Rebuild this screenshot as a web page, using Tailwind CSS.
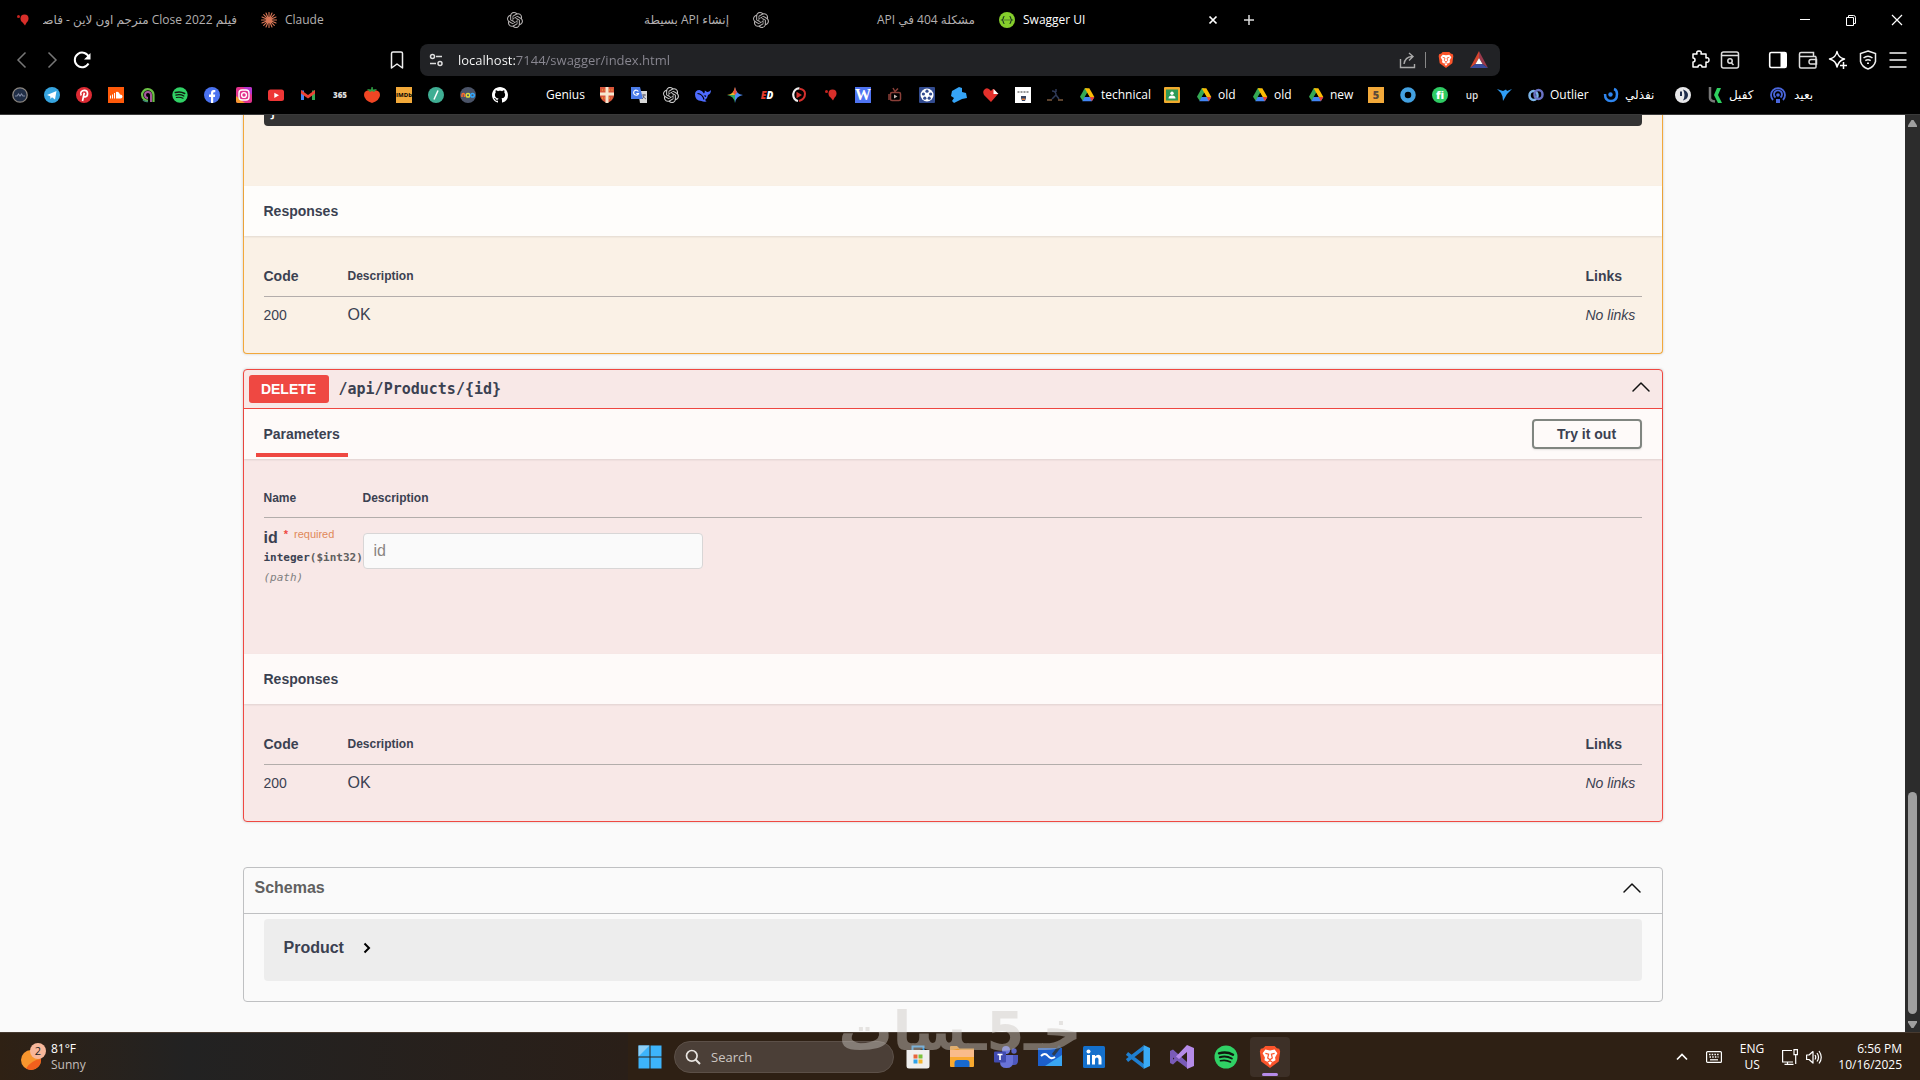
<!DOCTYPE html>
<html lang="en">
<head>
  <meta charset="UTF-8" />
  <meta name="viewport" content="width=device-width, initial-scale=1" />
  <title>Swagger UI</title>
  <script src="https://cdn.jsdelivr.net/npm/@tailwindcss/browser@4"></script>
</head>
<body class="flex h-screen flex-col overflow-hidden bg-[#fafafa] font-['Liberation_Sans',Arial,sans-serif] text-[#3b4151]">

  <!-- shared icons -->
  <svg class="hidden" aria-hidden="true">
    <symbol id="openai" viewBox="0 0 24 24">
      <path fill="currentColor" d="M22.2819 9.8211a5.9847 5.9847 0 0 0-.5157-4.9108 6.0462 6.0462 0 0 0-6.5098-2.9A6.0651 6.0651 0 0 0 4.9807 4.1818a5.9847 5.9847 0 0 0-3.9977 2.9 6.0462 6.0462 0 0 0 .7427 7.0966 5.98 5.98 0 0 0 .511 4.9107 6.051 6.051 0 0 0 6.5146 2.9001A5.9847 5.9847 0 0 0 13.2599 24a6.0557 6.0557 0 0 0 5.7718-4.2058 5.9894 5.9894 0 0 0 3.9977-2.9001 6.0557 6.0557 0 0 0-.7475-7.0729zm-9.022 12.6081a4.4755 4.4755 0 0 1-2.8764-1.0408l.1419-.0804 4.7783-2.7582a.7948.7948 0 0 0 .3927-.6813v-6.7369l2.02 1.1686a.071.071 0 0 1 .038.052v5.5826a4.504 4.504 0 0 1-4.4945 4.4944zm-9.6607-4.1254a4.4708 4.4708 0 0 1-.5346-3.0137l.142.0852 4.783 2.7582a.7712.7712 0 0 0 .7806 0l5.8428-3.3685v2.3324a.0804.0804 0 0 1-.0332.0615L9.74 19.9502a4.4992 4.4992 0 0 1-6.1408-1.6464zM2.3408 7.8956a4.485 4.485 0 0 1 2.3655-1.9728V11.6a.7664.7664 0 0 0 .3879.6765l5.8144 3.3543-2.0201 1.1685a.0757.0757 0 0 1-.071 0l-4.8303-2.7865A4.504 4.504 0 0 1 2.3408 7.872zm16.5963 3.8558L13.1038 8.364 15.1192 7.2a.0757.0757 0 0 1 .071 0l4.8303 2.7913a4.4944 4.4944 0 0 1-.6765 8.1042v-5.6772a.79.79 0 0 0-.407-.667zm2.0107-3.0231l-.142-.0852-4.7735-2.7818a.7759.7759 0 0 0-.7854 0L9.409 9.2297V6.8974a.0662.0662 0 0 1 .0284-.0615l4.8303-2.7866a4.4992 4.4992 0 0 1 6.6802 4.66zM8.3065 12.863l-2.02-1.1638a.0804.0804 0 0 1-.038-.0567V6.0742a4.4992 4.4992 0 0 1 7.3757-3.4537l-.142.0805L8.704 5.459a.7948.7948 0 0 0-.3927.6813zm1.0976-2.3654l2.602-1.4998 2.6069 1.4998v2.9994l-2.5974 1.4997-2.6067-1.4997Z" />
    </symbol>
    <symbol id="drive" viewBox="0 0 24 24">
      <path fill="#34a853" d="M8.500 2h3.500l2.300 4L5.800 21 1.500 14.500z" />
      <path fill="#fbbc04" d="M8.500 2h7l7.500 13h-7z" />
      <path fill="#4285f4" d="M8.500 15H23l-3.700 6.500H5z" />
      <path fill="#ea4335" d="M16 15h7l-3.700 6.500z" />
      <path fill="#000" d="M12 9l3.500 6h-7z" />
    </symbol>
    <symbol id="spotify" viewBox="0 0 24 24">
      <circle cx="12" cy="12" r="11.500" fill="#30d165" />
      <g fill="none" stroke="#10180f" stroke-linecap="round">
        <path stroke-width="2.400" d="M5 8.300c5-1.400 10-.9 14 1.400" />
        <path stroke-width="2" d="M5.800 12.200c4.200-1.200 8.400-.7 12 1.300" />
        <path stroke-width="1.600" d="M6.500 15.800c3.500-.9 6.900-.5 10 1.200" />
      </g>
    </symbol>
    <symbol id="brave" viewBox="0 0 24 26">
      <path fill="#fb542b" d="M7 1h10l2.500 2.500L22 4l1 3-1.500 11-9.500 7-9.500-7L1 7l1-3 2.500-.5z" />
      <path fill="#fff" d="M7 5l5 1 5-1 3 4-2.500 4.500.5 3-3.500 2L12 22l-2.500-3.500-3.500-2 .5-3L4 9z" />
      <path fill="none" stroke="#fb542b" stroke-width="1.300" d="M7 9l3.500 1-1 4 2.500 2 2.500-2-1-4L17 9M9.500 18.500L12 17l2.500 1.500" />
    </symbol>
    <symbol id="balloon" viewBox="0 0 16 16">
      <circle cx="9.500" cy="6.500" r="4" fill="#d92f2a" /><path fill="#d92f2a" d="M6.500 9h6L10 13.500z" /><circle cx="3.500" cy="4.500" r="1.500" fill="#c5231f" />
    </symbol>
    <symbol id="chevron-up" viewBox="0 0 20 20">
      <path fill="none" stroke="#111" stroke-width="1.500" stroke-linecap="round" stroke-linejoin="round" d="M2 14l8-8 8 8" />
    </symbol>
  </svg>

  <header class="shrink-0 border-b border-[#3a3a3a] bg-black font-['Open_Sans','Noto_Sans','DejaVu_Sans',sans-serif] text-white">
    <!-- tab strip -->
    <div class="flex h-10 items-center pl-[5px] text-xs">
      <div class="flex w-[246px] items-center gap-3 pr-3.5 pl-2.5 text-[#b4b0b0]">
        <svg class="size-4 shrink-0"><use href="#balloon" /></svg>
        <span dir="rtl" class="flex-1 overflow-hidden whitespace-nowrap">فيلم Close 2022 مترجم اون لاين - فاصل</span>
      </div>
      <div class="flex w-[246px] items-center gap-2 pr-3.5 pl-2.5 text-[#b4b0b0]">
        <svg class="size-4 shrink-0" viewBox="0 0 16 16" stroke="#d97757" stroke-width="1.100" stroke-linecap="round"><path d="M8 .5v15M.5 8h15M2.700 2.700l10.600 10.600M13.300 2.700L2.700 13.300M5 1l6 14M11 1L5 15M1 5l14 6M1 11l14-6" /></svg>
        <span>Claude</span>
      </div>
      <div class="flex w-[246px] items-center gap-2 pr-3.5 pl-2.5 text-[#b4b0b0]">
        <svg class="size-4 shrink-0"><use href="#openai" /></svg>
        <span dir="rtl" class="flex-1 whitespace-nowrap">إنشاء API بسيطة</span>
      </div>
      <div class="flex w-[246px] items-center gap-2 pr-3.5 pl-2.5 text-[#b4b0b0]">
        <svg class="size-4 shrink-0"><use href="#openai" /></svg>
        <span dir="rtl" class="flex-1 whitespace-nowrap">مشكلة 404 في API</span>
      </div>
      <div class="flex w-[246px] items-center gap-2 pr-3.5 pl-2.5">
        <svg class="size-4 shrink-0" viewBox="0 0 16 16"><circle cx="8" cy="8" r="8" fill="#85ce2c" /><path fill="none" stroke="#1d3b22" stroke-width="1.200" d="M5.500 4.500q-1.200 0-1.200 1.500T3 8q1.300.5 1.300 2t1.200 1.500M10.500 4.500q1.200 0 1.200 1.500T13 8q-1.300.5-1.300 2t-1.200 1.500" /><path stroke="#1d3b22" stroke-width="1.200" stroke-dasharray="1 1" d="M5.500 8h5" /></svg>
        <span class="flex-1">Swagger UI</span>
        <button type="button" aria-label="Close tab" class="size-4"><svg class="size-4" viewBox="0 0 16 16"><path stroke="#fff" stroke-width="1.700" d="M4.500 4.500l7 7M11.500 4.500l-7 7" /></svg></button>
      </div>
      <button type="button" aria-label="New tab" class="ml-1.5"><svg class="size-4" viewBox="0 0 16 16"><path stroke="#ddd" stroke-width="1.500" d="M8 3v10M3 8h10" /></svg></button>
      <div class="ml-auto flex gap-[30px] pr-[15px]">
        <button type="button" aria-label="Minimize"><svg class="size-4" viewBox="0 0 16 16"><path stroke="#fff" d="M3 7.500h10" /></svg></button>
        <button type="button" aria-label="Restore"><svg class="size-4" viewBox="0 0 16 16"><path fill="none" stroke="#fff" d="M3.500 5.500h7v8h-7zM5.500 5V3.500h5q2 0 2 2v6h-1.500" /></svg></button>
        <button type="button" aria-label="Close"><svg class="size-4" viewBox="0 0 16 16"><path stroke="#fff" stroke-width="1.200" d="M3 3l10 10M13 3L3 13" /></svg></button>
      </div>
    </div>

    <!-- toolbar -->
    <div class="grid h-10 grid-cols-[1fr_56.25%_1fr] items-center">
      <div class="flex items-center pr-[13px] pl-3">
        <button type="button" aria-label="Back"><svg class="size-5" viewBox="0 0 20 20"><path fill="none" stroke="#777" stroke-width="1.500" d="M13.500 2.500L6 10l7.500 7.500" /></svg></button>
        <button type="button" aria-label="Forward" class="ml-2.5"><svg class="size-5" viewBox="0 0 20 20"><path fill="none" stroke="#777" stroke-width="1.500" d="M6.500 2.500L14 10l-7.500 7.500" /></svg></button>
        <button type="button" aria-label="Reload" class="ml-2.5"><svg class="size-5" viewBox="0 0 20 20"><path fill="none" stroke="#fff" stroke-width="2" d="M16.500 13.500A7.300 7.300 0 1 1 17 7.500" /><path fill="#fff" d="M18.500 3v6.500H12z" /></svg></button>
        <button type="button" aria-label="Bookmark" class="ml-auto"><svg class="size-5" viewBox="0 0 20 20"><path fill="none" stroke="#eee" stroke-width="1.500" stroke-linejoin="round" d="M4.500 3.500q0-1.500 1.500-1.500h8q1.500 0 1.500 1.500V18L10 14l-5.500 4z" /></svg></button>
      </div>
      <div class="flex h-8 items-center rounded-lg bg-[#212225] pr-3 pl-2">
        <svg class="size-4 shrink-0" viewBox="0 0 16 16"><g fill="none" stroke="#ddd" stroke-width="1.500"><circle cx="4.500" cy="4.500" r="2" /><path d="M8 4.500h6M2 11.500h6" /><circle cx="12" cy="11.500" r="2" /></g></svg>
        <label for="address" class="sr-only">Address</label>
        <!-- host part is white, the rest of the address is grey -->
        <input id="address" type="text" value="localhost:7144/swagger/index.html" class="ml-3.5 h-6 flex-1 bg-[linear-gradient(to_right,#fff_57px,#8a8892_57px)] bg-clip-text text-[13px] text-transparent outline-none" />
        <svg class="size-[18px] shrink-0" viewBox="0 0 18 18"><path fill="none" stroke="#aaa" stroke-width="1.400" d="M1.500 8v8.500h14V13M5 13q1-7 8-7.500M10 2l4 3.500L10 9.500" /></svg>
        <span class="mx-2 h-4 w-px bg-[#888]"></span>
        <svg class="ml-1 h-5 w-4 shrink-0"><use href="#brave" /></svg>
        <svg class="ml-4 size-[18px] shrink-0" viewBox="0 0 18 18"><path fill="#d6452e" d="M9 0v7l-3.500 6L0 17z" /><path fill="#9b3a4c" d="M9 0l9 17-5.500-4L9 7z" /><path fill="#3b4b9b" d="M0 17l5.500-4h7l5.500 4z" /><path fill="#fff" d="M9 7l3.500 6h-7z" /></svg>
      </div>
      <div class="flex items-center justify-end gap-2.5 pr-3">
        <button type="button" aria-label="Extensions"><svg class="size-5" viewBox="0 0 20 20"><path fill="none" stroke="#fff" stroke-width="1.500" stroke-linejoin="round" d="M3 4h4q-1-3 2-3t2 3h5v4q3-1 3 2t-3 2v5h-4q0-2-2-2t-2 2H3v-5q2 0 2-2T3 8z" /></svg></button>
        <button type="button" aria-label="Search tabs"><svg class="size-5" viewBox="0 0 20 20"><g fill="none" stroke="#ddd" stroke-width="1.500"><rect x="1.500" y="2" width="17" height="16" rx="2" /><path d="M2 5.500h16M11.500 13l2 2" /><circle cx="10" cy="11" r="2.200" /></g></svg></button>
        <button type="button" aria-label="Sidebar" class="ml-[18px]"><svg class="size-5" viewBox="0 0 20 20"><rect x="1.700" y="2.500" width="16.500" height="15" rx="1.500" fill="none" stroke="#fff" stroke-width="1.600" /><path fill="#fff" d="M12.500 2.500h5.500v15h-5.500z" /></svg></button>
        <button type="button" aria-label="Wallet"><svg class="size-5" viewBox="0 0 20 20"><g fill="none" stroke="#ddd" stroke-width="1.500"><path d="M18 6.500V17q0 1-1 1H3q-1.500 0-1.500-1.500V4Q1.500 2.500 3 2.500h12.500v4" /><path d="M2 6.500h16M18.500 9.500H13q-2 0-2 2.300t2 2.200h5.500z" /></g></svg></button>
        <button type="button" aria-label="Leo"><svg class="size-5" viewBox="0 0 20 20"><path fill="none" stroke="#fff" stroke-width="1.500" stroke-linejoin="round" d="M9 1.500q1 6 7.500 7.500-3.500 1-5 3t-2.500 5Q8 10.500 1.500 9 8 7.500 9 1.500zM15.500 12v7M12 15.500h7" /></svg></button>
        <button type="button" aria-label="VPN"><svg class="size-5" viewBox="0 0 20 20"><g fill="none" stroke="#eee" stroke-width="1.500"><path d="M10 1l7.500 2.500v8Q16 17 10 19q-6-2-7.500-7.500v-8z" /><path d="M5.500 8q4.500-3.500 9 0M7.300 10.700q2.700-2 5.400 0M9 13.200h2" /></g></svg></button>
        <button type="button" aria-label="Menu"><svg class="size-5" viewBox="0 0 20 20"><path stroke="#bbb" stroke-width="2" d="M1.500 3h17M1.500 10h17M1.500 17h17" /></svg></button>
      </div>
    </div>

    <!-- bookmarks -->
    <nav class="mb-1 flex h-[30px] items-center gap-4 pl-3 text-xs whitespace-nowrap">
      <a href="#" aria-label="Bookmark 1"><svg class="size-4" viewBox="0 0 16 16"><circle cx="8" cy="8" r="7.200" fill="#1f2d45" stroke="#8b8680" stroke-width="1.300" /><path stroke="#7d87a0" stroke-width="1.200" d="M3 9h2l1.500-2L8 9l1.500-2L11 9h2" fill="none" /></svg></a>
      <a href="#" aria-label="Telegram"><svg class="size-4" viewBox="0 0 16 16"><circle cx="8" cy="8" r="8" fill="#37a5e0" /><path fill="#fff" d="M3 8l9.500-4-1.500 8.500-3-2.200L6.500 12l-.3-2.700z" /></svg></a>
      <a href="#" aria-label="Pinterest"><svg class="size-4" viewBox="0 0 16 16"><circle cx="8" cy="8" r="8" fill="#dc2a33" /><path fill="none" stroke="#fff" stroke-width="1.700" d="M5.200 8.500C3.500 5.500 6 3.300 8.400 3.300c4.300 0 3.800 6.200.8 6.500-1 .1-1.800-.5-1.900-1M8.300 5.800L6.500 14" /></svg></a>
      <a href="#" aria-label="SoundCloud"><svg class="size-4" viewBox="0 0 16 16"><path fill="#ff5a0a" d="M0 0h16v16H0z" /><path stroke="#fff" d="M2.500 8.500v3M4.500 7.500v4M6.500 6v5.500" /><path fill="#fff" d="M8 5q3-1 4 2.500 2.500 0 2.500 2T12.500 11.500H8z" /></svg></a>
      <a href="#" aria-label="Bookmark 5"><svg class="size-4" viewBox="0 0 16 16"><path fill="none" stroke="#6bc045" stroke-width="2.200" d="M13.500 15V7.500A5.700 5.700 0 1 0 8 13.500" /><path fill="none" stroke="#a6579c" stroke-width="2" d="M11 15V7.800A3 3 0 1 0 8 11" /><path fill="none" stroke="#3b8a70" stroke-width="1.500" d="M3 13q2 2 5 1.500" /></svg></a>
      <a href="#" aria-label="Spotify"><svg class="size-4"><use href="#spotify" /></svg></a>
      <a href="#" aria-label="Facebook"><svg class="size-4" viewBox="0 0 16 16"><circle cx="8" cy="8" r="8" fill="#4a72f0" /><path fill="#fff" d="M7 16v-6H5V7.600h2V6q0-3 2.700-3h1.600v2.200H10q-.8 0-.8 1v1.400h2L10.900 10H9.200v6z" /></svg></a>
      <a href="#" aria-label="Instagram"><svg class="size-4" viewBox="0 0 16 16"><rect width="16" height="16" rx="2" fill="#e2328d" /><path fill="#f79a2e" d="M0 9v5q0 2 2 2h7z" /><path fill="#b535d0" d="M7 0h7q2 0 2 2v6z" /><g fill="none" stroke="#fff" stroke-width="1.400"><rect x="3" y="3" width="10" height="10" rx="3" /><circle cx="8" cy="8" r="2.400" /></g></svg></a>
      <a href="#" aria-label="YouTube"><svg class="size-4" viewBox="0 0 16 16"><rect y="2.500" width="16" height="11.500" rx="2.500" fill="#ee3636" /><path fill="#fff" d="M6.300 5.700l4.700 2.600-4.700 2.600z" /></svg></a>
      <a href="#" aria-label="Gmail"><svg class="size-4" viewBox="0 0 16 16"><path fill="#4285f4" d="M1 3.500h3V13H1z" /><path fill="#34a853" d="M12 3.500h3V13h-3z" /><path fill="#ea4335" d="M1 3l7 5 7-5v3.500L8 11.500 1 6.500z" /></svg></a>
      <a href="#" aria-label="365" class="w-4 text-center text-[8px] leading-3 font-extrabold text-[#ddd]">365</a>
      <a href="#" aria-label="Strawberry"><svg class="size-4" viewBox="0 0 16 16"><path fill="#f04624" d="M8 3.500q8-1 8 4.500 0 5-8 8-8-3-8-8 0-5.500 8-4.500z" /><path fill="#2f9e44" d="M3 2l4 .5L7.500 0h1.200L9 2.500 13 2l-3 3-2-1-2 1z" /></svg></a>
      <a href="#" aria-label="IMDb" class="flex size-4 items-center justify-center bg-[#f2a93a] text-[6px] font-bold text-black">IMDb</a>
      <a href="#" aria-label="Bookmark 14"><svg class="size-4" viewBox="0 0 16 16"><circle cx="8" cy="8" r="8" fill="#3fae93" /><path stroke="#fff" stroke-width="1.500" d="M6 12.500l4-9" /></svg></a>
      <a href="#" aria-label="Bookmark 15"><svg class="size-4" viewBox="0 0 16 16"><circle cx="8" cy="8" r="8" fill="#4b5468" /><g fill="none" stroke-width="1.500"><path stroke="#ff6a2b" d="M2 10V8q0-1.500 1.300-1.500T4.500 8v2" /><circle cx="8" cy="8.300" r="1.800" stroke="#dcdc40" /><circle cx="12.500" cy="8.300" r="1.800" stroke="#31a8ff" /></g></svg></a>
      <a href="#" aria-label="GitHub"><svg class="size-4" viewBox="0 0 16 16"><path fill="#fff" d="M8 0C3.580 0 0 3.580 0 8c0 3.540 2.290 6.530 5.470 7.590.4.070.55-.17.55-.38 0-.19-.01-.82-.01-1.490-2.010.37-2.530-.49-2.690-.94-.09-.23-.48-.94-.82-1.130-.28-.15-.68-.52-.01-.53.63-.01 1.080.58 1.230.82.72 1.210 1.870.87 2.330.66.07-.52.28-.87.51-1.070-1.780-.2-3.640-.89-3.640-3.950 0-.87.31-1.590.82-2.150-.08-.2-.36-1.020.08-2.120 0 0 .67-.21 2.200.82.64-.18 1.320-.27 2-.27s1.360.09 2 .27c1.530-1.040 2.200-.82 2.200-.82.44 1.100.16 1.920.08 2.120.51.56.82 1.270.82 2.150 0 3.070-1.870 3.750-3.650 3.950.29.25.54.73.54 1.480 0 1.070-.01 1.930-.01 2.200 0 .21.15.46.55.38A8.010 8.010 0 0 0 16 8c0-4.420-3.580-8-8-8z" /></svg></a>
      <a href="#" class="w-[59px] pl-[22px]">Genius</a>
      <a href="#" aria-label="Cambridge"><svg class="size-4" viewBox="0 0 16 16"><path fill="#d8553a" d="M1 0h14v9q-1 5-7 7-6-2-7-7z" /><path stroke="#f7e7cf" stroke-width="3" d="M8 0v16M1 7h14" /><path stroke="#e9a23a" stroke-width="1.500" stroke-dasharray="1 1.500" d="M3 3h3M10 3h4M3 11h3M10 11h3" /></svg></a>
      <a href="#" aria-label="Translate"><svg class="size-4" viewBox="0 0 16 16"><path fill="#d8d8d8" d="M7 4h9v12H9z" /><path fill="#4a7be8" d="M0 0h9l3 12H0z" /><path fill="none" stroke="#fff" stroke-width="1.200" d="M7.300 4.500A2.500 2.500 0 1 0 7.500 6.500H5.300" /><path fill="none" stroke="#667" d="M11 8h4M13 7v1q0 3-2 4M12 9q1 2 3 3" /></svg></a>
      <a href="#" aria-label="ChatGPT" class="text-[#ccc]"><svg class="size-4"><use href="#openai" /></svg></a>
      <a href="#" aria-label="DeepSeek"><svg class="size-4" viewBox="0 0 16 16"><path fill="#4d6bfe" d="M0 7.500q0-4.500 4.500-4.500 3 .5 4.500 3.500 1-1 .8-3 1.500.5 2.200 1.500 2 .3 4-2 0 4-3 5-.5 3.500-3 5 1 .8 1.500 1.500-3 .5-5-.5Q0 13.500 0 7.500z" /><path fill="none" stroke="#000" stroke-width="1.200" d="M2.500 6.500q5 .5 6.500 6M9.500 8.500l1.500 1" /></svg></a>
      <a href="#" aria-label="Gemini"><svg class="size-4" viewBox="0 0 16 16"><path fill="#4f8df5" d="M8 0q1 7 8 8-7 1-8 8z" /><path fill="#f0b429" d="M0 8q7-1 8-8v8z" /><path fill="#34a866" d="M0 8q7 1 8 8V8z" /><path fill="#ea5140" d="M8 0q.5 3.500 2 5.500L8 8 6 5.500Q7.500 3.500 8 0z" /></svg></a>
      <a href="#" aria-label="ED" class="w-4 text-center text-[10px] leading-4 font-extrabold text-[#e33a2c] italic">E<span class="text-white">D</span></a>
      <a href="#" aria-label="Bookmark 24"><svg class="size-4" viewBox="0 0 16 16"><path fill="none" stroke="#eee" stroke-width="2.200" d="M7 14A5.500 6.300 0 0 1 8.500 1.500" /><path fill="none" stroke="#d5302d" stroke-width="2" d="M8.500 1.700q5.500.8 5.500 5 0 5.300-6 7.300" /><path fill="#d5302d" d="M5.500 4.800l5.500 3.200-5.500 3.200z" /></svg></a>
      <a href="#" aria-label="Bookmark 25"><svg class="size-4"><use href="#balloon" /></svg></a>
      <a href="#" aria-label="W" class="flex size-4 items-center justify-center bg-[#4f74f2] font-['Liberation_Serif',serif] text-base leading-4 font-bold text-white">W</a>
      <a href="#" aria-label="Bookmark 27"><svg class="size-4" viewBox="0 0 16 16"><g fill="none" stroke="#8a3f38" stroke-width="1.500"><rect x="3.500" y="5.500" width="10" height="8" rx="1.500" /><path d="M6 1l2 3.500 3-3M2 7v6" /></g><path fill="#c9b6b0" d="M7 7.500l3.500 2L7 11.500z" /></svg></a>
      <a href="#" aria-label="Bookmark 28"><svg class="size-4" viewBox="0 0 16 16"><rect width="16" height="16" rx="1" fill="#324b8f" /><circle cx="8" cy="8" r="6.500" fill="#fff" /><g fill="#324b8f"><circle cx="8" cy="4.200" r="1.600" /><circle cx="11.600" cy="7" r="1.600" /><circle cx="10.200" cy="11.200" r="1.600" /><circle cx="5.800" cy="11.200" r="1.600" /><circle cx="4.400" cy="7" r="1.600" /></g></svg></a>
      <a href="#" aria-label="Bookmark 29"><svg class="size-4" viewBox="0 0 16 16"><path fill="#35a4f7" d="M1 4l7-4 3 1v4l4 1 1 5-5 1-4 2-4 2-2-2 2-3-3-2z" /></svg></a>
      <a href="#" aria-label="Bookmark 30"><svg class="size-4" viewBox="0 0 16 16"><path fill="#e3302b" d="M8 15L1 8Q-1 4 2 2t6 2q1-2 3-2l4 5z" /><path fill="#fff" d="M10.500 2l5 5h-5z" /></svg></a>
      <a href="#" aria-label="Bookmark 31"><svg class="size-4" viewBox="0 0 16 16"><path fill="#fff" d="M0 0h16v16H0z" /><path stroke="#777" stroke-width="1.500" stroke-dasharray="2 1" d="M2.500 5h11" /><path fill="#3a4560" d="M6 9h5v2l-1 3H7l-1-3z" /><path fill="#e07a35" d="M7 11.500h3V13H7z" /></svg></a>
      <a href="#" aria-label="Bookmark 32"><svg class="size-4" viewBox="0 0 16 16"><path fill="none" stroke="#2f3a58" stroke-width="1.500" d="M5 4q4 0 4 4l-4 4M9 8l3 4M9 2v3" /><path stroke="#7c5a3e" stroke-width="1.500" d="M0 13h5M11 13h5" /></svg></a>
      <a href="#" class="flex w-[69px] items-center gap-1.5"><svg class="size-4 shrink-0"><use href="#drive" /></svg>technical</a>
      <a href="#" aria-label="Classroom"><svg class="size-4" viewBox="0 0 16 16"><rect width="16" height="16" rx="1" fill="#f2ab2e" /><path fill="#2d9a57" d="M2 2.500h12v11H2z" /><circle cx="8" cy="6.300" r="1.700" fill="#fff" /><path fill="#fff" d="M4.500 11.500q0-3 3.500-3t3.500 3z" /></svg></a>
      <a href="#" class="flex w-10 items-center gap-1.5"><svg class="size-4 shrink-0"><use href="#drive" /></svg>old</a>
      <a href="#" class="flex w-10 items-center gap-1.5"><svg class="size-4 shrink-0"><use href="#drive" /></svg>old</a>
      <a href="#" class="flex w-11 items-center gap-1.5"><svg class="size-4 shrink-0"><use href="#drive" /></svg>new</a>
      <a href="#" aria-label="Khamsat" class="flex size-4 items-center justify-center bg-[#f2a93a] text-[11px] font-extrabold text-[#5b4a3a]">5</a>
      <a href="#" aria-label="Mostaql"><svg class="size-4" viewBox="0 0 16 16"><circle cx="8" cy="8" r="5.500" fill="none" stroke="#43a0e0" stroke-width="4.500" /></svg></a>
      <a href="#" aria-label="Fiverr" class="flex size-4 items-center justify-center rounded-full bg-[#2fcb63] text-[11px] font-extrabold text-white">fi</a>
      <a href="#" aria-label="Upwork" class="w-4 text-center text-[10px] leading-4 font-semibold text-[#ddd]">up</a>
      <a href="#" aria-label="Freelancer"><svg class="size-4" viewBox="0 0 16 16"><path fill="#2f9df4" d="M1 2l6 2 3-1.500 1 1.500 5-2-5 5-4 7-.5-4.500L5 6z" /></svg></a>
      <a href="#" class="flex w-[59px] items-center gap-1.5"><svg class="size-4 shrink-0" viewBox="0 0 16 16"><g fill="none" stroke-width="2.500"><ellipse cx="5.500" cy="8.500" rx="4" ry="4.500" stroke="#7db5e8" /><ellipse cx="10.500" cy="7.500" rx="4" ry="4.500" stroke="#6a72c4" /></g></svg>Outlier</a>
      <a href="#" class="flex w-14 items-center gap-1.5"><svg class="size-4 shrink-0" viewBox="0 0 16 16"><path fill="none" stroke="#2f86ef" stroke-width="2.500" d="M2 7q0 7 6 7t6-7q0-4-3-5" /><circle cx="7.500" cy="7.500" r="2.200" fill="#2f86ef" /></svg>نفذلي</a>
      <a href="#" aria-label="Bookmark 46"><svg class="size-4" viewBox="0 0 16 16"><circle cx="8" cy="8" r="8" fill="#e8e8ea" /><path fill="#1d2b4a" d="M8 2.500q5 1.500 5 5.500t-5 5.500q3-5.500 0-11z" /><path stroke="#1d2b4a" stroke-width="2" d="M6 4.500V9" /></svg></a>
      <a href="#" class="flex w-[47px] items-center gap-1.5"><svg class="size-4 shrink-0" viewBox="0 0 16 16"><path stroke="#777" stroke-width="2.500" fill="none" d="M3 0v11q0 3 5 3.500" /><path fill="#2ed15f" d="M10 1h4l-3 7 4 8h-4L7 8z" /></svg>كفيل</a>
      <a href="#" class="flex items-center gap-2"><svg class="size-4 shrink-0" viewBox="0 0 16 16"><g fill="none" stroke="#4a66dc" stroke-width="1.800"><path d="M3 13a7 7 0 1 1 10 0" /><path d="M5.500 10.500a4 4 0 1 1 5 0" /></g><circle cx="8" cy="8" r="1.800" fill="#4a66dc" /><path fill="#4a66dc" d="M6 12h4v4H6z" /></svg>بعيد</a>
    </nav>
  </header>

  <div class="flex min-h-0 flex-1">
    <main class="min-w-0 flex-1 overflow-hidden">
      <div class="mx-auto w-full max-w-[1460px] px-5">

        <!-- PUT /api/Products/{id} -->
        <section class="rounded-b border border-t-0 border-[#f2a83b] bg-[#faf1e6] shadow-[0_0_3px_rgba(0,0,0,0.19)]">
          <pre class="mx-5 mb-[60px] flex h-[11px] items-end overflow-hidden rounded-b bg-[#333] px-1.5 pb-1 font-['DejaVu_Sans_Mono',monospace] text-xs leading-4 font-bold text-white">}</pre>
          <div class="flex h-[50px] items-center bg-[#fefdfb] px-5 shadow-[0_1px_2px_rgba(0,0,0,0.1)]">
            <h4 class="text-sm font-bold">Responses</h4>
          </div>
          <div class="p-5">
            <table class="w-full table-fixed text-left text-sm">
              <thead>
                <tr class="h-10 border-b border-[#b3adab]">
                  <th class="w-[84px] font-bold">Code</th>
                  <th class="text-xs font-bold">Description</th>
                  <th class="w-14 font-bold">Links</th>
                </tr>
              </thead>
              <tbody>
                <tr class="h-[37px]">
                  <td>200</td>
                  <td class="text-base">OK</td>
                  <td class="whitespace-nowrap italic">No links</td>
                </tr>
              </tbody>
            </table>
          </div>
        </section>

        <!-- DELETE /api/Products/{id} -->
        <section class="mt-[15px] rounded border border-[#ef4842] bg-[#f8e8e7] shadow-[0_0_3px_rgba(0,0,0,0.19)]">
          <div class="flex h-[39px] items-center border-b border-[#ef4842] pr-[11px] pl-[5px]">
            <span class="w-20 rounded-[3px] bg-[#ef4842] py-1 text-center text-sm font-bold text-white">DELETE</span>
            <a href="#" class="ml-2.5 flex-1 font-['DejaVu_Sans_Mono',monospace] text-[15px] font-bold">/api/Products/{id}</a>
            <button type="button" aria-label="Collapse operation"><svg class="mb-1 size-5"><use href="#chevron-up" /></svg></button>
          </div>
          <div class="flex h-[50px] items-start justify-between bg-[#fefaf9] pr-5 pl-3 shadow-[0_1px_2px_rgba(0,0,0,0.1)]">
            <h4 class="mt-1 h-11 border-b-4 border-[#ef4842] px-2 pt-[11px] text-sm font-bold">Parameters</h4>
            <button type="button" class="mt-2.5 h-[30px] w-[110px] rounded border-2 border-[#808580] text-sm font-bold shadow-[0_1px_2px_rgba(0,0,0,0.1)]">Try it out</button>
          </div>
          <div class="h-[195px] p-5">
            <table class="w-full table-fixed text-left">
              <thead>
                <tr class="h-[38px] border-b border-[#b3adab] text-xs">
                  <th class="w-[99px] font-bold">Name</th>
                  <th class="font-bold">Description</th>
                </tr>
              </thead>
              <tbody>
                <tr class="align-top">
                  <td class="pt-2.5">
                    <label for="param-id" class="flex h-5 items-center text-base font-bold">id<span class="mb-1.5 ml-1.5 text-[11px] text-[#ef4842]">*</span><span class="mb-1.5 ml-1.5 text-[11px] font-normal text-[#e0885a]">required</span></label>
                    <div class="font-['DejaVu_Sans_Mono',monospace] text-[11px] leading-5 font-bold">integer<span class="text-[#606060]">($int32)</span></div>
                    <div class="font-['DejaVu_Sans_Mono',monospace] text-[11px] leading-5 text-[#808080] italic">(path)</div>
                  </td>
                  <td class="pt-[15px]">
                    <input id="param-id" type="text" placeholder="id" class="block h-9 w-[340px] rounded border border-[#d8d6d6] bg-[#fafafa] px-2.5 text-base placeholder:text-[#8a8582]" />
                  </td>
                </tr>
              </tbody>
            </table>
          </div>
          <div class="flex h-[50px] items-center bg-[#fefaf9] px-5 shadow-[0_1px_2px_rgba(0,0,0,0.1)]">
            <h4 class="text-sm font-bold">Responses</h4>
          </div>
          <div class="p-5">
            <table class="w-full table-fixed text-left text-sm">
              <thead>
                <tr class="h-10 border-b border-[#b3adab]">
                  <th class="w-[84px] font-bold">Code</th>
                  <th class="text-xs font-bold">Description</th>
                  <th class="w-14 font-bold">Links</th>
                </tr>
              </thead>
              <tbody>
                <tr class="h-[37px]">
                  <td>200</td>
                  <td class="text-base">OK</td>
                  <td class="whitespace-nowrap italic">No links</td>
                </tr>
              </tbody>
            </table>
          </div>
        </section>

        <!-- models -->
        <section class="mt-[45px] rounded border border-[#bfc0c2] pb-5">
          <div class="flex h-[46px] items-center justify-between border-b border-[#bfc0c2] pr-5 pb-1.5 pl-[11px]">
            <h4 class="text-base font-bold text-[#606060]">Schemas</h4>
            <button type="button" aria-label="Collapse schemas"><svg class="size-5"><use href="#chevron-up" /></svg></button>
          </div>
          <div class="mx-5 mt-[5px] h-[62px] rounded bg-[#ededed] px-5 pt-[17px]">
            <button type="button" class="flex items-center gap-[17px] text-base font-bold">Product
              <svg class="size-3" viewBox="0 0 12 12"><path fill="none" stroke="#000" stroke-width="2" d="M3.500 1.500L8 6l-4.500 4.500" /></svg>
            </button>
          </div>
        </section>
      </div>
    </main>

    <!-- scrollbar -->
    <div class="flex w-[15px] shrink-0 flex-col items-center bg-[#2c2c2c] pt-1 pb-1" aria-hidden="true">
      <svg class="h-2.5 w-[9px]" viewBox="0 0 9 10"><path fill="#9f9f9f" d="M3.500 1h2L9 6.500V8H0V6.500z" /></svg>
      <div class="flex-1"></div>
      <div class="h-[222px] w-[9px] rounded-full bg-[#9f9f9f]"></div>
      <svg class="mt-1 h-2.5 w-[9px]" viewBox="0 0 9 10"><path fill="#9f9f9f" d="M0 3h9v1.500L5.500 10h-2L0 4.500z" /></svg>
    </div>
  </div>

  <!-- taskbar -->
  <footer class="relative grid h-12 shrink-0 grid-cols-[1fr_auto_1fr] items-center border-t border-[#473a30] bg-[#2e2014] font-['Open_Sans','Noto_Sans',sans-serif] text-xs text-white">
    <div class="flex h-full items-center bg-linear-to-r from-[#2f2114] via-[#222222] via-30% to-[#2a1f18] pl-5">
      <svg class="size-7 shrink-0" viewBox="0 0 28 28">
        <circle cx="11" cy="17" r="10" fill="#f7962e" /><path fill="#f2601d" d="M21 16a10 10 0 0 1-15 9.500q6-9 15-9.500z" />
        <circle cx="18" cy="8" r="8" fill="#f7b79a" />
        <text x="18" y="12" text-anchor="middle" font-size="11" fill="#222">2</text>
      </svg>
      <div class="ml-[3px] leading-4">
        <div>81°F</div>
        <div class="text-[#c4beba]">Sunny</div>
      </div>
    </div>

    <div class="flex items-center">
      <button type="button" aria-label="Start" class="flex w-11 justify-center"><svg class="size-6" viewBox="0 0 24 24"><path fill="#3db4fb" d="M.5.500h11v11H.5zM12.500.500h11v11h-11zM.5 12.500h11v11H.5zM12.500 12.500h11v11h-11z" /><path fill="#8fd0f7" d="M.5.500h11L.5 11.500z" /></svg></button>
      <div class="mx-0.5 flex h-8 w-[220px] items-center rounded-full border border-[#5c5048] bg-[#4b3f37] pl-2.5">
        <svg class="size-4 shrink-0" viewBox="0 0 16 16"><circle cx="6.800" cy="6.800" r="5.300" fill="none" stroke="#e8e4e0" stroke-width="1.700" /><path stroke="#e8e4e0" stroke-width="2" d="M10.500 10.500l4.500 4.500" /></svg>
        <label for="search" class="sr-only">Search</label>
        <input id="search" type="text" placeholder="Search" class="ml-2.5 h-6 w-36 bg-transparent text-[13px] outline-none placeholder:text-[#cbc6c2]" />
      </div>
      <button type="button" aria-label="Microsoft Store" class="flex w-11 justify-center"><svg class="size-6" viewBox="0 0 24 24"><path fill="none" stroke="#3a9fe8" stroke-width="2" d="M6.500 6V1.500h11V6" /><path fill="#f0efee" d="M.5 5h23v16q0 2.500-2.500 2.500H3Q.5 23.500.5 21z" /><path fill="#e8663d" d="M7.500 9.500h4v4h-4z" /><path fill="#7cc23c" d="M12.500 9.500h4v4h-4z" /><path fill="#2fa3ea" d="M7.500 14.500h4v4h-4z" /><path fill="#f5b52e" d="M12.500 14.500h4v4h-4z" /></svg></button>
      <button type="button" aria-label="File Explorer" class="flex w-11 justify-center"><svg class="size-6" viewBox="0 0 24 24"><path fill="#ee9a2d" d="M0 2q0-1 1-1h6l2.500 2.500H24V12H0z" /><path fill="#f9bb8a" d="M0 5h24v9H0z" /><path fill="#f8a92f" d="M0 12h24v9q0 1-1 1H1q-1 0-1-1z" /><path fill="#1769cf" d="M4.500 22v-4q0-3 3-3h9q3 0 3 3v4z" /></svg></button>
      <button type="button" aria-label="Teams" class="flex w-11 justify-center"><svg class="size-6" viewBox="0 0 24 24"><circle cx="12" cy="5" r="4" fill="#6d78dd" /><circle cx="20" cy="6" r="2.700" fill="#5a64c4" /><path fill="#4e58bd" d="M15 10h9v6q0 4-4 4h-3z" /><path fill="#6872d8" d="M6 10h13v7q0 6-6.500 6T6 17z" /><rect y="6.500" width="12" height="11" rx="1" fill="#414bb0" /><path stroke="#fff" stroke-width="1.600" d="M3.500 9.500h5M6 9.500V15" /></svg></button>
      <button type="button" aria-label="Whiteboard" class="flex w-11 justify-center"><svg class="size-6" viewBox="0 0 24 24"><path fill="#1c5fcb" d="M0 3h24v18H0z" /><path fill="#39a5f3" d="M24 10v11H7z" /><path fill="none" stroke="#fff" stroke-width="2" d="M3 11q4-4 7 0t7 1" /><path stroke="#2c3c50" stroke-width="3" d="M15 10l7-9" /></svg></button>
      <button type="button" aria-label="LinkedIn" class="flex w-11 justify-center"><svg class="size-6" viewBox="0 0 24 24"><rect x="1" y="1" width="22" height="22" rx="1.500" fill="#1470cc" /><g fill="#fff"><circle cx="6.500" cy="6.500" r="2" /><path d="M5 10h3v9.500H5zM10 10h3v1.300q3-3 5.500-.5 1 1 1 3.200v5.500h-3V14.500q0-2-1.700-2T13 14.500v5H10z" /></g></svg></button>
      <button type="button" aria-label="Visual Studio Code" class="flex w-11 justify-center"><svg class="size-6" viewBox="0 0 24 24"><path fill="none" stroke="#1f7fd0" stroke-width="3.500" d="M1 8.500L18 21.500M1 15.500L18 2.500" /><path fill="#3aabf5" d="M17.500 0L24 3v18l-6.500 3z" /></svg></button>
      <button type="button" aria-label="Visual Studio" class="flex w-11 justify-center"><svg class="size-6" viewBox="0 0 24 24"><path fill="#7a5bb8" d="M0 6l3-1.500L17 17v6L3 12.500v5L0 18z" /><path fill="#7a5bb8" d="M0 18l3 1.500L9 14l-3-2.500z" /><path fill="#b58be8" d="M17 0l7 3v18l-7 3V7l-8 7-3-2.500z" /></svg></button>
      <button type="button" aria-label="Spotify" class="flex w-11 justify-center"><svg class="size-6"><use href="#spotify" /></svg></button>
      <button type="button" aria-label="Brave" class="mx-0.5 flex h-10 w-10 flex-col items-center justify-between rounded bg-[#3d3027] pt-2"><svg class="size-6"><use href="#brave" /></svg><span class="mb-px h-[3px] w-4 rounded-full bg-[#b58be8]"></span></button>
    </div>

    <div class="flex items-center justify-end pr-[18px]">
      <svg class="size-3" viewBox="0 0 12 12"><path fill="none" stroke="#fff" stroke-width="1.700" d="M1 8.500l5-5 5 5" /></svg>
      <svg class="ml-[18px] size-4" viewBox="0 0 16 16"><rect x=".6" y="2.600" width="14.800" height="10.800" rx="1" fill="none" stroke="#fff" stroke-width="1.200" /><path stroke="#fff" stroke-width="1.300" stroke-dasharray="1.500 1.200" d="M3 5.500h10M3.500 8h9" /><path stroke="#fff" stroke-width="1.200" d="M4 10.800h8" /></svg>
      <div class="ml-[18px] text-center leading-4"><div>ENG</div><div>US</div></div>
      <svg class="ml-[18px] size-4" viewBox="0 0 16 16"><path fill="none" stroke="#fff" stroke-width="1.200" d="M10 1.500H.6v11.500H11M5.500 13v2.500M2.500 15.400h9M12 .6h3.400v5H12zM13.700 5.600V15" /></svg>
      <svg class="ml-2 size-4" viewBox="0 0 16 16"><path fill="none" stroke="#fff" stroke-width="1.200" stroke-linejoin="round" d="M.6 6v4.500H3l4 3.500V2.500L3 6zM9 6q1.500 2.200 0 4.500M11 4q3 4.200 0 8.500M13 2q4.500 6.200 0 12.500" /></svg>
      <div class="ml-4 text-right leading-4"><div>6:56 PM</div><div>10/16/2025</div></div>
    </div>

    <!-- watermark lies over the page and the taskbar -->
    <div dir="rtl" class="pointer-events-none absolute -top-7 left-1/2 -translate-x-1/2 font-['DejaVu_Sans',sans-serif] text-[54px] leading-none font-bold whitespace-nowrap text-[#cdc8c3] opacity-45">خـ5ـسات</div>
  </footer>
</body>
</html>
